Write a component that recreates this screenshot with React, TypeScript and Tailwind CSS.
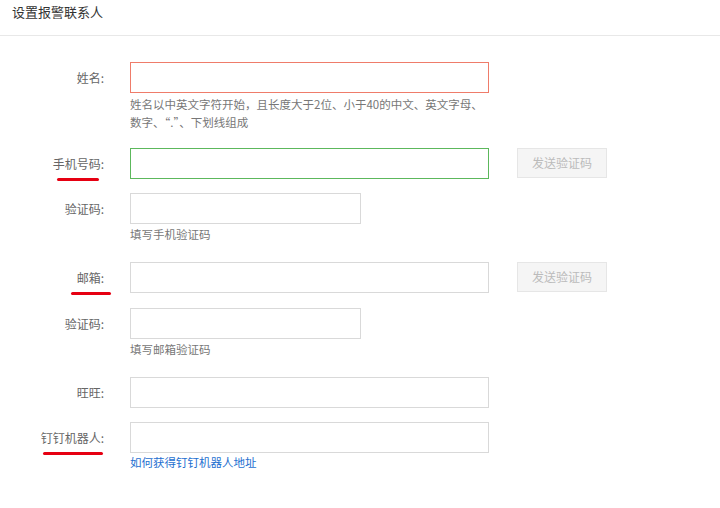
import type { ReactNode } from "react";

const font = { fontFamily: '"Noto Sans CJK SC", "Noto Sans", sans-serif' };

interface RowProps {
  label: string;
  underline?: string;
  children: ReactNode;
  className?: string;
}

function Row({ label, underline, children, className }: RowProps) {
  return (
    <div className={`flex items-start ${className ?? ""}`}>
      <div className="relative h-[31px] w-[104px] shrink-0 text-right text-[12px] leading-[31px] text-[#666]">
        {label}
        {underline ? (
          <span className={`absolute top-[30px] h-[3px] rounded-full bg-[#e60012] ${underline}`} />
        ) : null}
      </div>
      <div className="ml-[26px] flex flex-col">{children}</div>
    </div>
  );
}

function Input({ border = "border-[#d9d9d9]", width = "w-[359px]" }: { border?: string; width?: string }) {
  return <input className={`h-[31px] ${width} border bg-white outline-none ${border}`} />;
}

function SendButton() {
  return (
    <button className="ml-[28px] h-[30px] w-[90px] border border-[#e6e6e6] bg-[#f5f5f5] text-[12px] text-[#bbb]">
      发送验证码
    </button>
  );
}

function Help({ children, className = "mt-[1px]" }: { children: ReactNode; className?: string }) {
  return <p className={`text-[11.5px] leading-[18px] text-[#777] ${className}`}>{children}</p>;
}

export default function App() {
  return (
    <div className="h-[508px] w-[720px] bg-white" style={font}>
      <div className="h-[36px] border-b border-[#e8e8e8] pl-[12px] text-[13px] leading-[24px] text-[#333]">
        设置报警联系人
      </div>

      <div className="flex flex-col pt-[26px]">
        <Row label="姓名:">
          <Input border="border-[#ef7c6a]" />
          <Help className="mt-[2px] leading-[17px]">
            姓名以中英文字符开始，且长度大于2位、小于40的中文、英文字母、
            <br />
            数字、“.”、下划线组成
          </Help>
        </Row>

        <Row label="手机号码:" underline="left-[57px] w-[42px]" className="mt-[17px]">
          <div className="flex items-start">
            <Input border="border-[#5cb85c]" />
            <SendButton />
          </div>
        </Row>

        <Row label="验证码:" className="mt-[14px]">
          <Input width="w-[231px]" />
          <Help>填写手机验证码</Help>
        </Row>

        <Row label="邮箱:" underline="left-[71px] w-[40px]" className="mt-[19px]">
          <div className="flex items-start">
            <Input />
            <SendButton />
          </div>
        </Row>

        <Row label="验证码:" className="mt-[15px]">
          <Input width="w-[231px]" />
          <Help>填写邮箱验证码</Help>
        </Row>

        <Row label="旺旺:" className="mt-[19px]">
          <Input />
        </Row>

        <Row label="钉钉机器人:" underline="left-[43px] w-[60px]" className="mt-[14px]">
          <Input />
          <a className="text-[11.5px] leading-[18px] text-[#1e6fd0]">如何获得钉钉机器人地址</a>
        </Row>
      </div>
    </div>
  );
}
